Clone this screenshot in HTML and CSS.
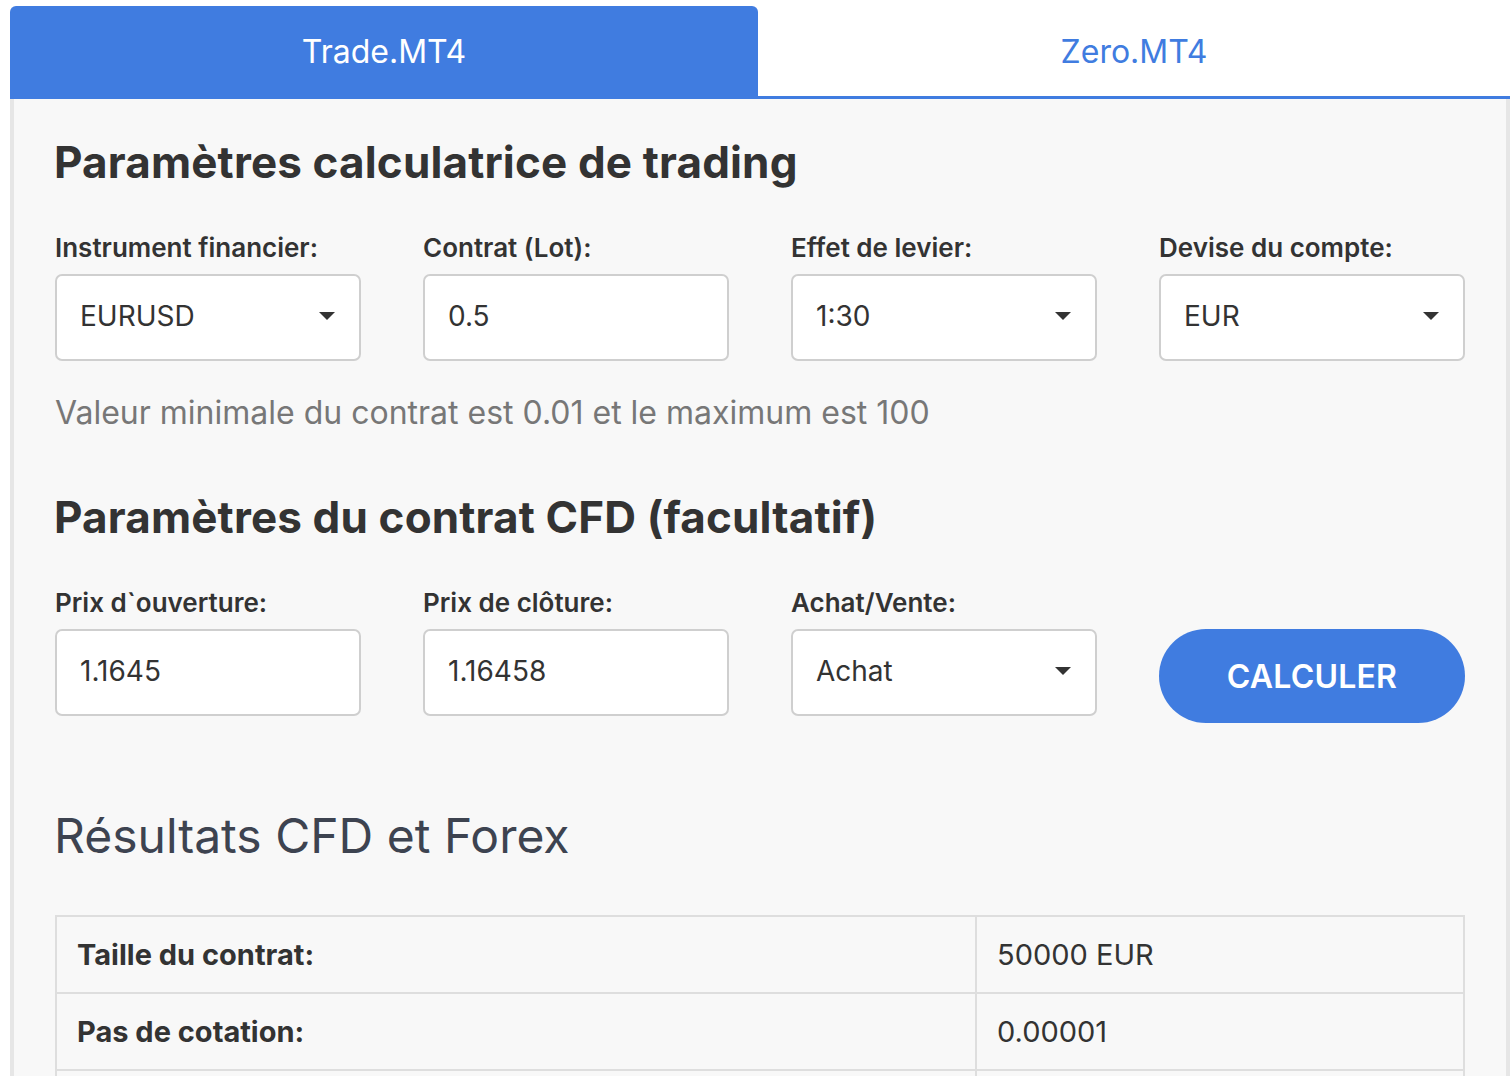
FILE: index.html
```html
<!DOCTYPE html>
<html lang="fr">
<head>
<meta charset="utf-8">
<title>Calculatrice de trading</title>
<link rel="stylesheet" href="styles.css">
</head>
<body>
<div class="page">
  <div class="tabs">
    <div class="tab active">Trade.MT4</div>
    <div class="tab">Zero.MT4</div>
  </div>
  <div class="panel">
    <h2 class="title">Paramètres calculatrice de trading</h2>
    <div class="grid">
      <div class="field">
        <div class="label">Instrument financier:</div>
        <div class="control select"><span>EURUSD</span><svg class="caret" viewBox="0 0 16 8" width="16" height="8"><path d="M0 0H16L8 8Z"/></svg></div>
      </div>
      <div class="field">
        <div class="label">Contrat (Lot):</div>
        <div class="control"><span>0.5</span></div>
      </div>
      <div class="field">
        <div class="label">Effet de levier:</div>
        <div class="control select"><span>1:30</span><svg class="caret" viewBox="0 0 16 8" width="16" height="8"><path d="M0 0H16L8 8Z"/></svg></div>
      </div>
      <div class="field">
        <div class="label">Devise du compte:</div>
        <div class="control select"><span>EUR</span><svg class="caret" viewBox="0 0 16 8" width="16" height="8"><path d="M0 0H16L8 8Z"/></svg></div>
      </div>
    </div>
    <p class="hint">Valeur minimale du contrat est 0.01 et le maximum est 100</p>
    <h2 class="title second">Paramètres du contrat CFD (facultatif)</h2>
    <div class="grid">
      <div class="field">
        <div class="label">Prix d`ouverture:</div>
        <div class="control"><span>1.1645</span></div>
      </div>
      <div class="field">
        <div class="label">Prix de clôture:</div>
        <div class="control"><span>1.16458</span></div>
      </div>
      <div class="field">
        <div class="label">Achat/Vente:</div>
        <div class="control select"><span>Achat</span><svg class="caret" viewBox="0 0 16 8" width="16" height="8"><path d="M0 0H16L8 8Z"/></svg></div>
      </div>
      <div class="field btn-field">
        <button class="calc">CALCULER</button>
      </div>
    </div>
    <h3 class="results">Résultats CFD et Forex</h3>
    <table class="res-table">
      <tr><th>Taille du contrat:</th><td>50000 EUR</td></tr>
      <tr><th>Pas de cotation:</th><td>0.00001</td></tr>
      <tr><th></th><td></td></tr>
    </table>
  </div>
</div>
</body>
</html>
```
FILE: styles.css
```css
* { box-sizing: border-box; }
html, body { margin: 0; padding: 0; background: #fff; }
body {
  font-family: Inter, "Noto Sans", "Liberation Sans", sans-serif;
  color: #333;
  overflow: hidden;
  height: 1076px;
}
.page {
  margin: 6px 2px 0 10px;
}
.tabs {
  display: flex;
  height: 93px;
}
.tab {
  flex: 1 1 0;
  display: flex;
  align-items: center;
  justify-content: center;
  font-size: 32px;
  color: #407ce0;
  background: #fff;
  border-bottom: 3px solid #407ce0;
}
.tab.active {
  background: #407ce0;
  color: #fff;
  border-radius: 6px 6px 0 0;
  flex: 0 0 748px;
}
.panel {
  background: #f8f8f8;
  border-left: 4px solid #e6e6e6;
  border-right: 4px solid #e6e6e6;
  padding: 36px 41px 40px 40px;
  min-height: 1000px;
}
.title {
  margin: 0;
  font-size: 44px;
  font-weight: 700;
  line-height: 54px;
  color: #333;
  letter-spacing: 0.15px;
}
.title.second { margin-top: 57px; }
.grid {
  display: grid;
  grid-template-columns: repeat(4, 1fr);
  column-gap: 62px;
  margin-top: 43px;
  padding-left: 1px;
}
.field { display: flex; flex-direction: column; }
.label {
  font-size: 26px;
  font-weight: 600;
  line-height: 32px;
  color: #333;
  margin-bottom: 10px;
}
.control {
  height: 87px;
  background: #fff;
  border: 2px solid #cfcfcf;
  border-radius: 7px;
  display: flex;
  align-items: center;
  justify-content: space-between;
  padding: 0 24px 3px 23px;
  font-size: 28px;
  color: #333;
}
.caret { fill: #333; }
.btn-field { justify-content: flex-end; }
.calc {
  height: 94px;
  margin-bottom: -7px;
  border: none;
  border-radius: 47px;
  background: #407ce0;
  color: #fff;
  font-family: inherit;
  font-size: 32px;
  font-weight: 600;
  letter-spacing: 0.2px;
}
.hint {
  margin: 32px 0 0 1px;
  font-size: 32px;
  line-height: 40px;
  color: #777;
}
.results {
  margin: 91px 0 0 0;
  font-size: 48px;
  font-weight: 400;
  line-height: 58px;
  color: #3d4350;
}
.res-table {
  margin-top: 50px;
  margin-left: 1px;
  width: calc(100% - 1px);
  border-collapse: collapse;
}
.res-table th, .res-table td {
  border: 2px solid #dedede;
  height: 77px;
  padding: 0 20px;
  text-align: left;
  font-size: 29px;
  color: #333;
}
.res-table th { font-weight: 700; width: 920px; }
.res-table td { font-weight: 400; }
```
